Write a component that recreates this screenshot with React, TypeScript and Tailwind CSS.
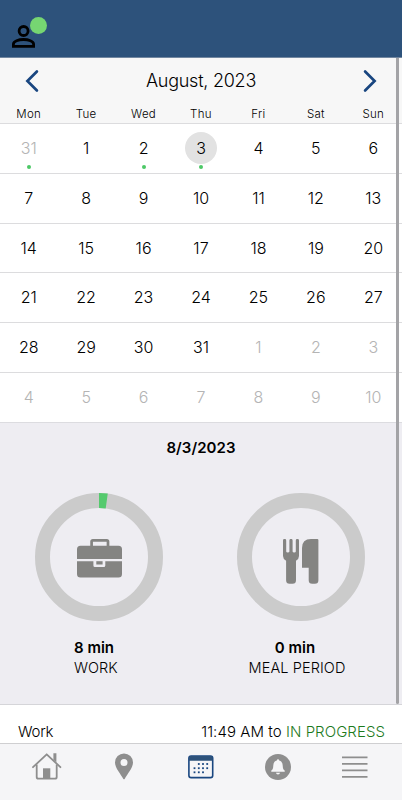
import clsx from 'clsx'

interface Day {
  day: number
  muted?: boolean
  marked?: boolean
  selected?: boolean
}

const WEEKDAYS = ['Mon', 'Tue', 'Wed', 'Thu', 'Fri', 'Sat', 'Sun']

const DAYS: Day[] = [
  { day: 31, muted: true, marked: true },
  ...Array.from({ length: 31 }, (_, i) => ({
    day: i + 1,
    marked: i === 1 || i === 2,
    selected: i === 2,
  })),
  ...Array.from({ length: 10 }, (_, i) => ({ day: i + 1, muted: true })),
]

const WEEKS = Array.from({ length: 6 }, (_, i) => DAYS.slice(i * 7, i * 7 + 7))

function PersonIcon() {
  return (
    <svg width="24" height="24" viewBox="0 0 24 24" fill="none" stroke="#000" strokeWidth="2.8">
      <circle cx="11.6" cy="6" r="4.5" />
      <path d="M1.4 21.4v-2.2c0-3 5.2-4.7 10.1-4.7s10.1 1.7 10.1 4.7v2.2Z" />
    </svg>
  )
}

function Chevron({ flip }: { flip?: boolean }) {
  return (
    <svg width="14" height="24" viewBox="0 0 14 24" fill="none" className={clsx(flip && 'rotate-180')}>
      <path d="M11.9 2.5 2.4 12l9.5 9.5" stroke="#194680" strokeWidth="2.7" strokeLinecap="round" />
    </svg>
  )
}

function BriefcaseIcon() {
  return (
    <svg width="45" height="39" viewBox="0 0 45 39" fill="#848482">
      <path d="M14.6 7V2.6q0-1.2 1.2-1.2h14q1.2 0 1.2 1.2V7" fill="none" stroke="#848482" strokeWidth="2.7" />
      <path d="M3.5 6.7h38A3.5 3.5 0 0 1 45 10.2V20H0v-9.8a3.5 3.5 0 0 1 3.5-3.5Z" />
      <path d="M0 22.2h16.4v4.3q0 1.5 1.5 1.5h8.9q1.5 0 1.5-1.5v-4.3H45V35a3.5 3.5 0 0 1-3.5 3.5h-38A3.5 3.5 0 0 1 0 35Z" />
      <path d="M19.3 22.2h6.3v3.3h-6.3z" />
    </svg>
  )
}

function CutleryIcon() {
  return (
    <svg width="36" height="45" viewBox="0 0 36 45" fill="#848482">
      <path d="M0 1.5a1.6 1.6 0 0 1 3.2 0v11q0 1 1.6 1t1.6-1v-11a1.6 1.6 0 0 1 3.2 0v11q0 1 1.6 1t1.6-1v-11a1.6 1.6 0 0 1 3.2 0V17q0 3-3 4.8V41.2q0 3.5-3.5 3.5h-2.9q-3.5 0-3.5-3.5V21.8Q0 20 0 17Z" />
      <path d="M34.3 0q1.1 0 1.1 1.1V41.2q0 3.5-3.5 3.5h-2.7q-3.5 0-3.5-3.5V28.7H19V9Q19 0 28 0Z" />
    </svg>
  )
}

interface RingProps {
  percent: number
  children: React.ReactNode
}

function Ring({ percent, children }: RingProps) {
  const r = 56.5
  const c = 2 * Math.PI * r

  return (
    <div className="grid size-32 justify-items-center">
      <svg width="128" height="128" viewBox="0 0 128 128" fill="none" className="col-start-1 row-start-1">
        <circle cx="64" cy="64" r={r} stroke="#cbcbcb" strokeWidth="15" />
        {percent > 0 && (
          <circle
            cx="64"
            cy="64"
            r={r}
            stroke="#55ca6e"
            strokeWidth="15"
            strokeDasharray={`${(percent / 100) * c} ${c}`}
            transform="rotate(-90 64 64)"
          />
        )}
      </svg>
      <div className="col-start-1 row-start-1 pt-[46px]">{children}</div>
    </div>
  )
}

function HomeIcon() {
  return (
    <svg width="30" height="27" viewBox="0 0 30 27" fill="none" stroke="#8e8e8e" strokeWidth="1.8">
      <path d="M1 14.2 14.7 1.3 28.4 14.2" strokeLinecap="round" strokeLinejoin="round" />
      <path d="M4.7 11.5V24q0 1.7 1.7 1.7H23q1.7 0 1.7-1.7V11.5" />
      <path d="M21.4.3h3v9.2l-3-2.8Z" fill="#8e8e8e" stroke="none" />
      <path d="M11 15.3h7.3V26H11Z" fill="#8e8e8e" stroke="none" />
    </svg>
  )
}

function PinIcon() {
  return (
    <svg width="18" height="27" viewBox="0 0 18 27">
      <path
        d="M9 .4a9 9 0 0 1 9 9c0 5.5-6 11.8-8.2 16.3q-.8 1.2-1.6 0C6 21.2 0 14.9 0 9.4a9 9 0 0 1 9-9Zm0 5.7a3.5 3.5 0 1 0 0 7 3.5 3.5 0 0 0 0-7Z"
        fill="#8e8e8e"
        fillRule="evenodd"
      />
    </svg>
  )
}

function CalendarIcon() {
  const dots = [
    [10.8, 9], [15, 9], [19.2, 9],
    [6.5, 13.2], [10.8, 13.2], [15, 13.2], [19.2, 13.2],
    [6.5, 17.3], [10.8, 17.3], [15, 17.3],
  ]

  return (
    <svg width="26" height="24" viewBox="0 0 26 24" fill="none">
      <rect x=".9" y="1" width="23.8" height="21.6" rx="2.2" stroke="#194680" strokeWidth="1.6" />
      <path d="M1 5.7V3q0-2 2-2h19.6q2 0 2 2v2.7Z" fill="#2d527b" />
      {dots.map(([x, y]) => (
        <rect key={`${x}-${y}`} x={x - 0.9} y={y - 0.9} width="1.8" height="1.8" fill="#194680" />
      ))}
    </svg>
  )
}

function BellIcon() {
  return (
    <svg width="26" height="26" viewBox="0 0 26 26">
      <circle cx="13" cy="13" r="13" fill="#8e8e8e" />
      <path
        d="M13 5.2q1.1 0 1.2 1.2c2.5.7 3.3 2.6 3.5 5 .2 3 .5 4 1.9 5.2.4.5.2 1.2-.5 1.2H6.9c-.7 0-.9-.7-.5-1.2 1.4-1.2 1.700-2.200 1.900-5.200.2-2.400 1-4.300 3.500-5Q11.900 5.200 13 5.200ZM10.900 18.700h4.200q-.4 1.800-2.100 1.800t-2.100-1.800Z"
        fill="#f5f5f7"
      />
    </svg>
  )
}

function MenuIcon() {
  return (
    <svg width="26" height="22" viewBox="0 0 26 22" stroke="#8e8e8e" strokeWidth="1.7">
      <path d="M0 1.3h25.5M0 7.8h25.5M0 14.3h25.5M0 20.8h25.5" />
    </svg>
  )
}

export default function App() {
  return (
    <div className="relative flex h-[800px] w-[402px] flex-col overflow-hidden bg-white font-['Inter',sans-serif] font-[350] text-black">
      <header className="h-[58px] shrink-0 border-b border-[#7287a0] bg-[#2d527b]">
        <div className="relative ml-3 w-6 pt-[25px]">
          <PersonIcon />
          <span className="absolute top-[17px] left-[18px] size-[17px] rounded-full bg-[#76d672]" />
        </div>
      </header>

      <section className="h-[65px] shrink-0 bg-[#f7f7f7]">
        <div className="flex h-[45px] items-center justify-between px-[25px]">
          <Chevron />
          <h1 className="text-[18px] font-light tracking-[-0.25px]">August, 2023</h1>
          <Chevron flip />
        </div>
        <div className="mt-px grid grid-cols-7 text-center text-[11.5px] leading-[20px] tracking-[0.3px]">
          {WEEKDAYS.map((d) => (
            <span key={d}>{d}</span>
          ))}
        </div>
      </section>

      <section className="h-[299px] shrink-0">
        {WEEKS.map((week, i) => (
          <div key={i} className="grid h-[49.83px] grid-cols-7 border-t border-[#dcdcde]">
            {week.map((d) => (
              <div key={d.day} className="flex flex-col items-center pt-2">
                <span
                  className={clsx(
                    'flex size-8 items-center justify-center rounded-full text-[16px]',
                    d.muted && 'text-[#b4b4b4]',
                    d.selected && 'bg-[#e2e2e2]',
                  )}
                >
                  {d.day}
                </span>
                {d.marked && <span className="mt-[1px] size-1 rounded-full bg-[#4cc866]" />}
              </div>
            ))}
          </div>
        ))}
      </section>

      <section className="h-[282px] shrink-0 border-t border-[#dcdce0] bg-[#eeedf2]">
        <h2 className="pt-[13px] text-center text-[15px] leading-6 font-semibold tracking-[0.05px]">8/3/2023</h2>
        <div className="mt-[33.3px] flex pl-[35px]">
          <div className="w-[201.5px]">
            <Ring percent={2.2}>
              <BriefcaseIcon />
            </Ring>
            <div className="mt-[17px] ml-[39px] text-[15px] leading-5">
              <p className="font-semibold">8 min</p>
              <p className="text-[14.5px]">WORK</p>
            </div>
          </div>
          <div className="w-32">
            <Ring percent={0}>
              <CutleryIcon />
            </Ring>
            <div className="mt-[17px] w-[121px] text-center text-[15px] leading-5">
              <p className="pr-1 font-semibold">0 min</p>
              <p className="text-[14.5px] tracking-[0.1px]">MEAL PERIOD</p>
            </div>
          </div>
        </div>
      </section>

      <div className="flex h-[39px] shrink-0 items-end justify-between border-t border-[#d5d5d9] pr-[17px] pl-[18px] text-[15px] leading-[22px]">
        <span className="tracking-[-0.2px]">Work</span>
        <span className="tracking-[0.06px]">
          11:49 AM to <span className="text-[#1c7a1c]">IN PROGRESS</span>
        </span>
      </div>

      <nav className="grid h-[57px] shrink-0 grid-cols-[93px_61px_94px_59px_95px] border-t border-[#cfcfd1] bg-[#f5f5f7] *:flex *:h-[45px] *:items-center *:justify-center">
        <span><HomeIcon /></span>
        <span><PinIcon /></span>
        <span><CalendarIcon /></span>
        <span><BellIcon /></span>
        <span><MenuIcon /></span>
      </nav>

      {/* Scroll indicator */}
      <div className="absolute top-[58px] left-[396px] h-[646px] w-[3px] rounded-b-full bg-[#a3a3a6]" />
    </div>
  )
}
